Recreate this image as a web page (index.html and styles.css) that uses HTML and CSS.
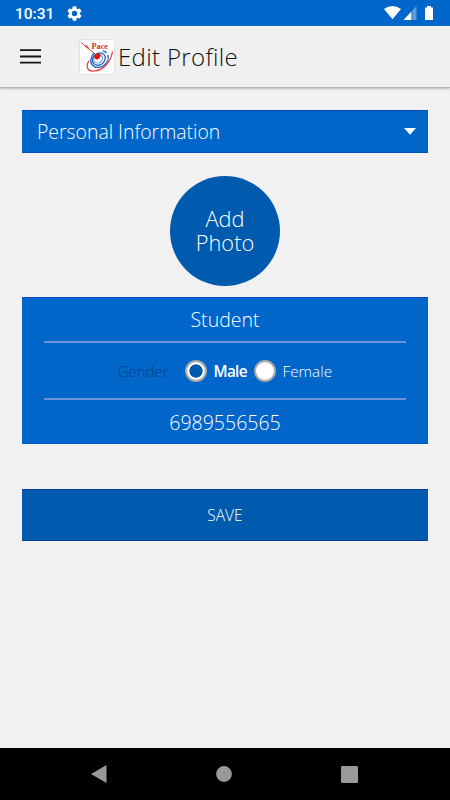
FILE: index.html
```html
<!DOCTYPE html>
<html lang="en">
<head>
<meta charset="utf-8">
<title>Edit Profile</title>
<link rel="stylesheet" href="styles.css">
</head>
<body>
<div class="status">
  <span class="clock">10:31</span>
  <svg class="gear" width="15" height="15" viewBox="2 2 20 20"><path fill="#fff" d="M19.14 12.94c.04-.3.06-.61.06-.94s-.02-.64-.07-.94l2.03-1.58a.49.49 0 0 0 .12-.61l-1.92-3.32a.49.49 0 0 0-.59-.22l-2.39.96a7 7 0 0 0-1.62-.94l-.36-2.54a.48.48 0 0 0-.48-.41h-3.84a.48.48 0 0 0-.47.41l-.36 2.54a7.400 7.400 0 0 0-1.620.94l-2.390-.96a.48.48 0 0 0-.59.22L2.740 8.870a.48.48 0 0 0 .12.61l2.030 1.580a6 6 0 0 0 0 1.880l-2.030 1.580a.49.49 0 0 0-.12.61l1.920 3.320c.12.22.37.29.59.22l2.390-.96c.5.38 1.030.7 1.620.94l.36 2.540c.05.24.24.41.48.41h3.840c.24 0 .44-.17.47-.41l.36-2.540a7 7 0 0 0 1.620-.94l2.390.96c.22.08.47 0 .59-.22l1.920-3.320a.48.48 0 0 0-.12-.61zM12 15.600a3.600 3.600 0 1 1 0-7.200 3.600 3.600 0 0 1 0 7.200z"/></svg>
  <svg class="signals" width="50" height="14" viewBox="0 0 50 14">
    <path fill="#fff" d="M0 3Q8.500-3 17 3L8.500 13.300z"/>
    <path fill="#5b9ce0" d="M32.500 0v14H19.500z"/>
    <path fill="#fff" d="M27 6v8h-7.500z"/>
    <path fill="#fff" d="M41 1.500h2V0h4v1.500h2V14h-8z"/>
  </svg>
</div>
<header class="appbar">
  <svg class="menu" width="21" height="15" viewBox="0 0 21 15"><path stroke="#161616" stroke-width="1.800" d="M0 1.200h21M0 7.500h21M0 13.700h21"/></svg>
  <svg class="logo" width="36" height="36" viewBox="0 0 36 36">
    <rect x=".5" y=".5" width="35" height="35" rx="2.500" fill="#fff" stroke="#e2e2e2"/>
    <g fill="none" transform="rotate(-40 20.500 20)">
      <ellipse cx="20.500" cy="20" rx="9.300" ry="7.800" stroke="#2b70c0" stroke-width="1.500" stroke-dasharray="38 9" stroke-dashoffset="-2"/>
      <ellipse cx="20" cy="19.600" rx="6.900" ry="5.700" stroke="#2169bd" stroke-width="1.300"/>
      <ellipse cx="19.600" cy="19" rx="4.600" ry="3.900" stroke="#4b8ad0" stroke-width="1"/>
    </g>
    <ellipse cx="18.400" cy="17.400" rx="3.300" ry="2.600" fill="#e60d12" transform="rotate(-40 18.400 17.400)"/>
    <path d="M2 3.500l16 13M7 6l2.500 4M6 7.500l3.500 1" stroke="#d33c3c" fill="none"/>
    <path d="M10 21.500c-3.500 6-2 11 5 10.500C24 31.500 32 23 33.500 12.500" stroke="#e33" stroke-width="1.200" fill="none"/>
    <text class="logo-text" x="12.500" y="10" textLength="16.500" lengthAdjust="spacingAndGlyphs">Pace</text>
  </svg>
  <h1 class="title"><span>Edit Profile</span></h1>
</header>
<main class="content">
  <div class="section"><span class="section-name">Personal Information</span><svg width="12" height="7" viewBox="0 0 12 7"><path fill="#fff" d="M0 0h12L6 6.700z"/></svg></div>
  <div class="photo">Add<br>Photo</div>
  <div class="card">
    <div class="row name"><span>Student</span></div>
    <div class="row gender">
      <span class="label">Gender :</span><i class="radio checked"></i><span class="male">Male</span><i class="radio"></i><span class="female">Female</span>
    </div>
    <div class="row phone"><span>6989556565</span></div>
  </div>
  <div class="save"><span>SAVE</span></div>
</main>
<nav class="navbar">
  <svg width="16" height="18" viewBox="0 0 16 18"><path fill="#999" d="M15.500 0v18L0 9z"/></svg>
  <svg width="16" height="16" viewBox="0 0 16 16"><circle cx="8" cy="8" r="7.900" fill="#999"/></svg>
  <svg width="17" height="17" viewBox="0 0 17 17"><rect width="17" height="17" rx="1.200" fill="#999"/></svg>
</nav>
</body>
</html>
```
FILE: styles.css
```css
* { box-sizing: border-box; }
body {
  margin: 0; width: 450px; height: 800px; overflow: hidden;
  display: flex; flex-direction: column;
  background: #f1f1f1; color: #fff;
  font-family: "Open Sans", "Noto Sans", sans-serif; font-weight: 300;
}
svg { display: block; flex: none; }
span { white-space: nowrap; }
.status { height: 26px; background: #0066ca; display: flex; align-items: center; padding: 0 16px 0 15px; }
.clock { font: 500 15.500px Roboto, sans-serif; width: 52px; padding-top: 2px; }
.signals { margin-left: auto; }
.appbar { height: 62px; display: flex; align-items: center; padding-left: 20px; background: #f0f0f0; border-bottom: 1px solid #b8b8b8; box-shadow: 0 1px 2px #bbb; color: #111; }
.logo { margin-left: 38px; }
.logo-text { font: bold 8.500px "Liberation Serif", serif; fill: #df2226; }
.title { margin: 0 0 0 3px; font-size: 24px; font-weight: 300; line-height: 32px; letter-spacing: .35px; }
.content { flex: 1; padding: 22px 22px 0; }
.section { height: 43px; display: flex; align-items: center; justify-content: space-between; padding: 0 12px 0 15px; background: #0066ca; border-top: 1px solid #004bbd; border-bottom: 1px solid #0055c0; font-size: 19.400px; }
.photo { width: 110px; height: 110px; margin: 23px auto 11px; padding-top: 31px; border-radius: 50%; background: #005aae; text-align: center; font-size: 21.800px; line-height: 24px; }
.card { height: 147px; padding: 0 22px; background: #0066ca; border-top: 1px solid #004bbd; border-bottom: 1px solid #0055c0; }
.row { display: flex; align-items: center; justify-content: center; font-size: 19.500px; }
.name { height: 45px; border-bottom: 2px solid #6f92dc; }
.gender { height: 57px; border-bottom: 2px solid #6f92dc; font-size: 15.300px; padding-top: 1px; }
.phone { height: 44px; }
.label { width: 67px; color: #05407c; letter-spacing: -.2px; }
.radio { width: 22px; height: 22px; border: 2px solid #aaa; border-radius: 50%; background: #fff; flex: none; }
.checked { background: radial-gradient(circle, #005aae 6.300px, #fff 7px); }
.male { font-weight: 600; width: 47px; padding-left: 7px; letter-spacing: -.7px; }
.female { width: 57px; padding-left: 7px; }
.save { height: 52px; margin-top: 45px; display: flex; align-items: center; justify-content: center; background: #005aae; border-top: 1px solid #003fa0; border-bottom: 1px solid #003fa0; font-size: 15.500px; }
.navbar { height: 52px; background: #000; display: flex; align-items: center; justify-content: space-between; padding: 0 92px 0 91px; }
```
